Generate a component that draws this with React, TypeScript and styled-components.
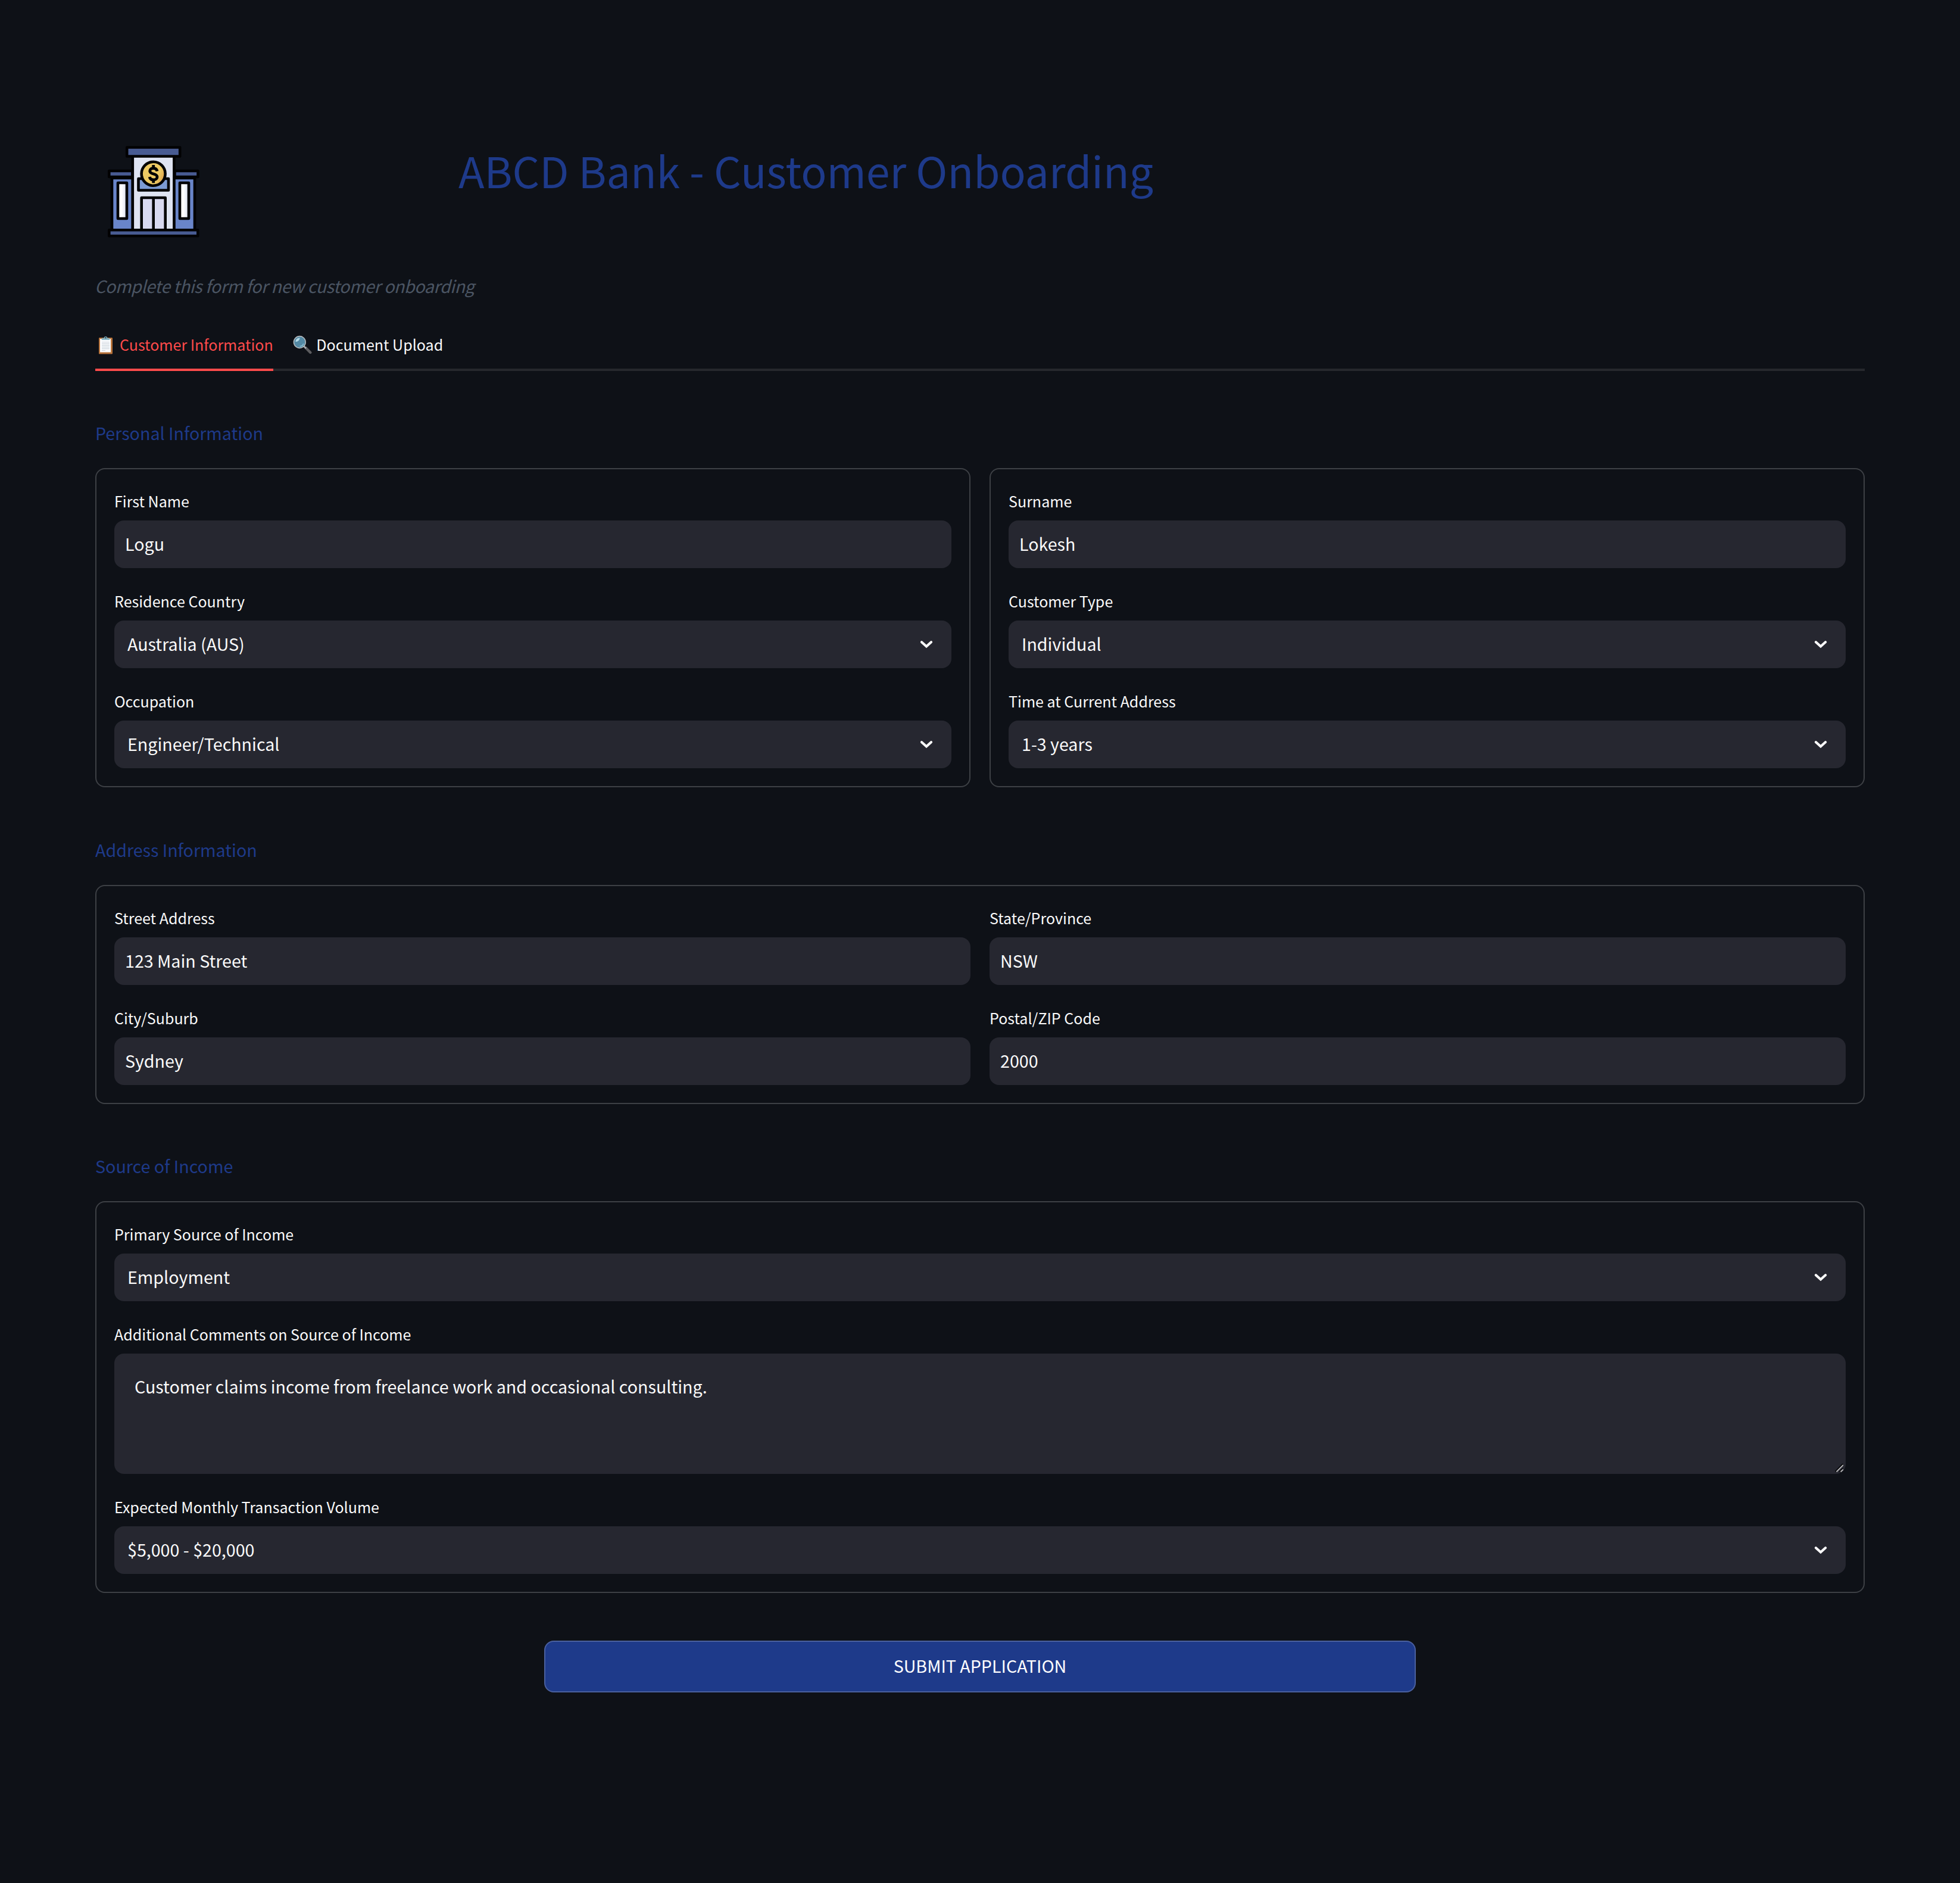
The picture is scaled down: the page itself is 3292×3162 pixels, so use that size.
import React from "react";
import styled, { createGlobalStyle } from "styled-components";

const colors = {
  page: "#0e1117",
  field: "#262730",
  line: "#3d4045",
  text: "#fafafa",
  navy: "#1e3a8a",
  red: "#ff4b4b",
  muted: "#4b5563",
};

const GlobalStyle = createGlobalStyle`
  * { box-sizing: border-box; }
  html, body { margin: 0; background: ${colors.page}; }
  body {
    font-family: "Noto Sans CJK SC", "Noto Sans", sans-serif;
    font-weight: 400;
    color: ${colors.text};
  }
`;

const Page = styled.main`
  min-height: 3162px;
  padding: 220px 160px 0;
  background: ${colors.page};
`;

const Header = styled.header`
  display: flex;
  height: 220px;
`;

const LogoCell = styled.div`
  width: 610px;
  padding: 25px 0 0 21px;
`;

const Title = styled.h1`
  margin: 0;
  padding-top: 12px;
  height: 106px;
  font-size: 71.6px;
  line-height: 106px;
  font-weight: 400;
  color: ${colors.navy};
  white-space: nowrap;
`;

const Subtitle = styled.p`
  margin: 0 0 0 -1px;
  height: 80px;
  line-height: 80px;
  font-size: 28.63px;
  font-style: italic;
  letter-spacing: -0.43px;
  color: ${colors.muted};
`;

const TabBar = styled.nav`
  display: flex;
  gap: 31.5px;
  margin: 20px 0 -0.5px;
  height: 83px;
  box-shadow: inset 0 -4px 0 #26282d;
`;

const Tab = styled.div<{ $active?: boolean }>`
  display: flex;
  align-items: center;
  height: 83px;
  padding-bottom: 3px;
  border-bottom: 4px solid ${(p) => (p.$active ? colors.red : "transparent")};
  color: ${(p) => (p.$active ? colors.red : colors.text)};
  font-size: 25.05px;
  line-height: 40px;
  white-space: nowrap;
  svg {
    margin-right: 7px;
  }
`;

const SectionTitle = styled.h2`
  margin: 0;
  height: 163.5px;
  padding: 84.5px 0 0;
  line-height: 40px;
  font-size: 28.63px;
  font-weight: 400;
  color: ${colors.navy};
`;

const Columns = styled.div`
  display: grid;
  grid-template-columns: 1fr 1fr;
  gap: 32px;
`;

const Card = styled.section`
  display: flex;
  flex-direction: column;
  gap: 32px;
  padding: 30px;
  border: 2px solid ${colors.line};
  border-radius: 16px;
`;

const FieldBox = styled.div`
  display: flex;
  flex-direction: column;
`;

const Label = styled.label`
  height: 56px;
  line-height: 46px;
  font-size: 25.05px;
  white-space: nowrap;
`;

const Control = styled.div<{ $select?: boolean }>`
  display: flex;
  align-items: center;
  justify-content: space-between;
  height: 80px;
  padding: 0 30px 2px ${(p) => (p.$select ? 22 : 18)}px;
  border-radius: 16px;
  background: ${colors.field};
  font-size: 28.63px;
  line-height: 40px;
`;

const TextArea = styled.div`
  display: flex;
  align-items: flex-start;
  justify-content: space-between;
  height: 201.6px;
  padding: 34px 4px 2px 34px;
  border-radius: 16px;
  background: ${colors.field};
  font-size: 28.63px;
  line-height: 42px;
  svg {
    align-self: flex-end;
  }
`;

const ButtonRow = styled.div`
  display: flex;
  justify-content: center;
  margin-top: 80px;
`;

const SubmitButton = styled.button`
  width: 1464px;
  height: 87px;
  padding: 0 0 3px;
  border: 2px solid #4a609f;
  border-radius: 16px;
  background: ${colors.navy};
  color: #fff;
  font-family: inherit;
  font-size: 28.63px;
  line-height: 40px;
`;

function BankLogo() {
  return (
    <svg width="154" height="154" viewBox="0 0 154 154">
      <defs>
        <linearGradient id="glass" x1="0" x2="1">
          <stop offset="0.4" stopColor="#ffffff" />
          <stop offset="0.9" stopColor="#dfe4f2" />
        </linearGradient>
        <linearGradient id="coin" x1="0" x2="1" y1="0.3" y2="0.7">
          <stop offset="0.7" stopColor="#edca63" />
          <stop offset="1" stopColor="#dd9a45" />
        </linearGradient>
      </defs>
      <g stroke="#020203" strokeWidth="4.6" strokeLinejoin="round">
        <rect x="7" y="54" width="35" height="88" fill="#6985c9" />
        <rect x="111" y="54" width="35" height="88" fill="#6985c9" />
        <rect x="2.3" y="42" width="39" height="10" fill="#485b92" />
        <rect x="112.5" y="42" width="39" height="10" fill="#485b92" />
        <rect x="41.8" y="16" width="69.6" height="126" fill="#dfe4f2" />
        <rect x="32.2" y="2.5" width="89" height="15" fill="#485b92" />
        <rect x="17" y="62" width="15" height="60" fill="url(#glass)" />
        <rect x="121" y="62" width="15" height="60" fill="url(#glass)" />
        <rect x="51.5" y="55" width="50.5" height="19.5" fill="#7c9bd3" />
        <rect x="56.7" y="87" width="40" height="55" fill="#d8d9f0" />
        <path d="M76.7 87v55" />
        <rect x="2.3" y="141.3" width="149" height="10" fill="#485b92" />
        <circle cx="76.6" cy="46.8" r="20" fill="url(#coin)" />
      </g>
      <path
        d="M83 42.500c-.8-3.600-3.200-5-6.300-5-3.800 0-6 2-6 4.700 0 6.300 12.300 3.400 12.300 9.800 0 3.200-2.500 5-6.300 5-3.400 0-5.800-1.500-6.500-5M76.700 32v5M76.700 57v5.200"
        fill="none"
        stroke="#020203"
        strokeWidth="4.800"
      />
    </svg>
  );
}

function ClipboardIcon() {
  return (
    <svg width="34" height="34" viewBox="0 0 34 34">
      <rect x="6" y="6" width="23" height="27.500" rx="1.200" fill="#b8733a" />
      <path d="M8 8h18v22.500H8z" fill="#fbfcfe" />
      <path d="M11 13.500h13M11 16.300h13M11 19.100h13M11 21.900h13M11 24.700h13M11 27.500h6" stroke="#ccd4dc" strokeWidth="1.200" />
      <path d="M10.700 9.800V8.300c0-1 .8-1.600 2-1.600h2a2.800 2.800 0 0 1 5.600 0h2c1.200 0 2 .6 2 1.600v1.500z" fill="#7fb0c2" />
      <circle cx="17.500" cy="6.200" r="1.100" fill="#1d3038" />
    </svg>
  );
}

function MagnifierIcon() {
  return (
    <svg width="34" height="34" viewBox="0 0 34 34">
      <path d="M23.500 23l7.800 8" stroke="#5c5c5f" strokeWidth="4.400" strokeLinecap="round" />
      <path d="M20.500 20.500l3.500 3.500" stroke="#a9adb0" strokeWidth="2.500" />
      <circle cx="13.300" cy="13.500" r="9.900" fill="#5389a4" stroke="#b6bbbe" strokeWidth="1.500" />
      <path d="M6.500 13c0-4 2.500-6.500 7-6.500 0 3-3 6.500-7 6.500z" fill="#b5dbe8" />
      <path d="M13.500 20.500c3 0 5.500-2 6.200-4.500" fill="none" stroke="#8cc0d4" strokeWidth="1.500" />
    </svg>
  );
}

function Chevron() {
  return (
    <svg width="24" height="20" viewBox="0 0 24 20">
      <path d="M4 7.200l8 7.300 8-7.300" fill="none" stroke="#fafafa" strokeWidth="4.200" strokeLinecap="round" />
    </svg>
  );
}

function ResizeGrip() {
  return (
    <svg width="20" height="16" viewBox="0 0 20 16">
      <path d="M7 14L19.500 1.500M14 14.500l5.500-5" stroke="#050608" strokeWidth="2.600" />
      <path d="M8.500 14.500L20 3M15.500 14.500l4.500-4" stroke="#b8b8ba" strokeWidth="1.800" />
    </svg>
  );
}

function Field({ label, value, select }: { label: string; value: string; select?: boolean }) {
  return (
    <FieldBox>
      <Label>{label}</Label>
      <Control $select={select}>
        <span>{value}</span>
        {select && <Chevron />}
      </Control>
    </FieldBox>
  );
}

export default function App() {
  return (
    <>
      <GlobalStyle />
      <Page>
        <Header>
          <LogoCell>
            <BankLogo />
          </LogoCell>
          <Title>ABCD Bank - Customer Onboarding</Title>
        </Header>
        <Subtitle>Complete this form for new customer onboarding</Subtitle>
        <TabBar>
          <Tab $active>
            <ClipboardIcon />
            Customer Information
          </Tab>
          <Tab>
            <MagnifierIcon />
            Document Upload
          </Tab>
        </TabBar>

        <SectionTitle>Personal Information</SectionTitle>
        <Columns>
          <Card>
            <Field label="First Name" value="Logu" />
            <Field label="Residence Country" value="Australia (AUS)" select />
            <Field label="Occupation" value="Engineer/Technical" select />
          </Card>
          <Card>
            <Field label="Surname" value="Lokesh" />
            <Field label="Customer Type" value="Individual" select />
            <Field label="Time at Current Address" value="1-3 years" select />
          </Card>
        </Columns>

        <SectionTitle>Address Information</SectionTitle>
        <Card>
          <Columns>
            <Field label="Street Address" value="123 Main Street" />
            <Field label="State/Province" value="NSW" />
            <Field label="City/Suburb" value="Sydney" />
            <Field label="Postal/ZIP Code" value="2000" />
          </Columns>
        </Card>

        <SectionTitle>Source of Income</SectionTitle>
        <Card>
          <Field label="Primary Source of Income" value="Employment" select />
          <FieldBox>
            <Label>Additional Comments on Source of Income</Label>
            <TextArea>
              <span>Customer claims income from freelance work and occasional consulting.</span>
              <ResizeGrip />
            </TextArea>
          </FieldBox>
          <Field label="Expected Monthly Transaction Volume" value="$5,000 - $20,000" select />
        </Card>

        <ButtonRow>
          <SubmitButton>SUBMIT APPLICATION</SubmitButton>
        </ButtonRow>
      </Page>
    </>
  );
}
